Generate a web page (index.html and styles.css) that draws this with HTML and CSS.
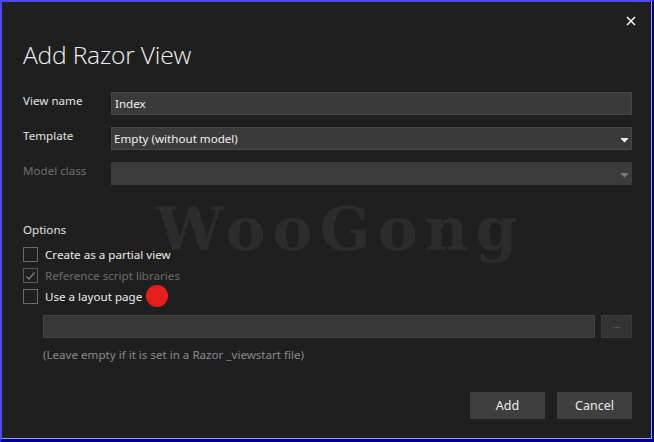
FILE: index.html
```html
<!DOCTYPE html>
<html>
<head>
<meta charset="utf-8">
<link rel="stylesheet" href="styles.css">
</head>
<body>
<div class="frame">
  <div class="dialog">
    <div class="titlebar">
      <svg class="close" width="10" height="10" viewBox="0 0 10 10"><path d="M1 1 L9 9 M9 1 L1 9" stroke="#f2f2f2" stroke-width="1.6" fill="none"/></svg>
    </div>
    <h1 class="title">Add Razor View</h1>
    <div class="form">
      <div class="row">
        <span class="label">View name</span>
        <div class="field input">Index</div>
      </div>
      <div class="row">
        <span class="label">Template</span>
        <div class="field select">Empty (without model)
          <svg class="arrow" width="7" height="5" viewBox="0 0 7 5"><path d="M0 0 H7 V1 L3.5 4.5 L0 1 Z" fill="#f0f0f0"/></svg>
        </div>
      </div>
      <div class="row">
        <span class="label disabled">Model class</span>
        <div class="field select off">
          <svg class="arrow" width="7" height="5" viewBox="0 0 7 5"><path d="M0 0 H7 V1 L3.5 4.5 L0 1 Z" fill="#7a7a7a"/></svg>
        </div>
      </div>
    </div>
    <div class="options-label">Options</div>
    <div class="checks">
      <div class="check"><span class="box"></span><span>Create as a partial view</span></div>
      <div class="check disabled"><span class="box"><svg width="11" height="10" viewBox="0 0 11 10"><path d="M1.5 5.5 L4 8 L9.5 1.5" stroke="#7a7a7a" stroke-width="1.4" fill="none"/></svg></span><span>Reference script libraries</span></div>
      <div class="check"><span class="box"></span><span>Use a layout page</span><span class="dot"></span></div>
    </div>
    <div class="path-row">
      <div class="field path"></div>
      <div class="browse">...</div>
    </div>
    <div class="hint">(Leave empty if it is set in a Razor _viewstart file)</div>
    <div class="footer">
      <div class="btn">Add</div>
      <div class="btn">Cancel</div>
    </div>
    <div class="watermark">WooGong</div>
  </div>
</div>
</body>
</html>
```

FILE: styles.css
```css
html, body {
  margin: 0;
  padding: 0;
  background: #000080;
}
.frame {
  width: 654px;
  height: 442px;
  box-sizing: border-box;
  border-style: solid;
  border-width: 2px 2px 3px 2px;
  border-color: #4a4af2 #00008a #00008a #4a4af2;
  background: #1f1f1f;
  box-shadow: inset -1px -1px 0 #9c9cf5;
  position: relative;
}
.dialog {
  position: relative;
  height: 100%;
  padding: 0 20px 0 21px;
  box-sizing: border-box;
  font-family: "Noto Sans", "Open Sans", sans-serif;
  font-size: 11.6px;
  color: #e2e2e2;
}
.titlebar {
  height: 38px;
  display: flex;
  justify-content: flex-end;
  align-items: center;
}
.close {
  margin-right: -4px;
  display: block;
}
.title {
  margin: 0;
  height: 30px;
  line-height: 30px;
  font-family: "Open Sans", "Noto Sans", sans-serif;
  font-weight: 300;
  font-size: 24.6px;
  color: #f0f0f0;
  letter-spacing: -0.2px;
}
.form {
  margin-top: 22px;
  display: flex;
  flex-direction: column;
  gap: 12px;
}
.row {
  display: flex;
  align-items: flex-start;
  height: 23px;
}
.label {
  width: 88px;
  flex: none;
  line-height: 17px;
}
.label.disabled {
  color: #6f6f6f;
}
.field {
  flex: 1;
  height: 23px;
  box-sizing: border-box;
  background: #3a3a3a;
  border: 1px solid #474747;
  line-height: 21px;
  padding-left: 3px;
  position: relative;
  color: #f0f0f0;
}
.select {
  padding-left: 2px;
}
.select.off {
  border-color: #3b3b3b;
  background: #3b3b3b;
}
.arrow {
  position: absolute;
  right: 3px;
  top: 10px;
  display: block;
}
.options-label {
  margin-top: 37px;
  line-height: 16px;
}
.checks {
  margin-top: 9px;
  display: flex;
  flex-direction: column;
  gap: 6px;
}
.check {
  display: flex;
  align-items: center;
  height: 15px;
  line-height: 15px;
  color: #ececec;
}
.check.disabled {
  color: #6c6c6c;
}
.box {
  width: 15px;
  height: 15px;
  box-sizing: border-box;
  border: 1px solid #6a6a6a;
  margin-right: 7px;
  display: flex;
  align-items: center;
  justify-content: center;
  flex: none;
}
.check.disabled .box {
  border-color: #5a5a5a;
}
.dot {
  flex: none;
  width: 22px;
  height: 22px;
  margin: -4px 0 -3px 4px;
  border-radius: 50%;
  background: #e61e1e;
}
.path-row {
  margin-top: 11px;
  margin-left: 20px;
  display: flex;
  gap: 6px;
  height: 23px;
}
.path {
  background: #383838;
  border-color: #424242;
}
.browse {
  width: 31px;
  height: 23px;
  box-sizing: border-box;
  background: #333333;
  border: 1px solid #3a3a3a;
  color: #7a7a7a;
  font-size: 9px;
  text-align: center;
  line-height: 18px;
}
.hint {
  margin-top: 9px;
  margin-left: 20px;
  line-height: 16px;
  color: #8a8a8a;
}
.footer {
  margin-top: 29px;
  display: flex;
  justify-content: flex-end;
  gap: 12px;
}
.btn {
  width: 75px;
  height: 27px;
  background: #3f3f3f;
  color: #ececec;
  text-align: center;
  line-height: 27px;
  font-size: 12.5px;
}
.watermark {
  position: absolute;
  left: 154px;
  top: 192px;
  font-family: "DejaVu Serif", serif;
  font-weight: bold;
  font-size: 60px;
  line-height: 70px;
  color: #2c2c2c;
  pointer-events: none;
  letter-spacing: 7px;
  z-index: 0;
}
.form, .checks, .path-row, .hint, .footer, .options-label, .title {
  position: relative;
  z-index: 1;
}
```
